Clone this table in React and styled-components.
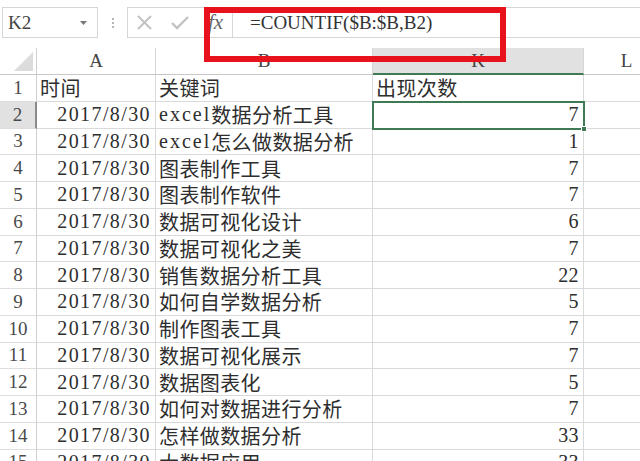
import React from "react";
import styled, { createGlobalStyle } from "styled-components";

const GlobalStyle = createGlobalStyle`
  html, body {
    margin: 0;
    padding: 0;
    background: #ffffff;
    overflow: hidden;
  }
  * {
    box-sizing: border-box;
  }
`;

const Page = styled.div`
  position: relative;
  width: 640px;
  height: 461px;
  overflow: hidden;
  background: #ffffff;
  font-family: "Liberation Serif", "Noto Sans CJK SC", serif;
  color: #333333;
`;

const FormulaBar = styled.div`
  display: flex;
  align-items: center;
  height: 48px;
  padding: 7px 0 10px 2px;
`;

const NameBox = styled.div`
  display: flex;
  align-items: center;
  justify-content: space-between;
  width: 96px;
  height: 31px;
  border: 1px solid #d6d6d6;
  padding: 0 10px 0 5px;
  font-size: 19px;
  color: #444444;
`;

const Dots = styled.div`
  display: flex;
  flex-direction: column;
  gap: 2px;
  margin: 0 13px 0 14px;
  span {
    width: 2px;
    height: 2px;
    background: #b5b5b5;
  }
`;

const ActionBox = styled.div`
  display: flex;
  align-items: center;
  width: 105px;
  height: 31px;
  border: 1px solid #d6d6d6;
  border-right: none;
  padding-left: 8px;
  gap: 18px;
`;

const FxLabel = styled.span`
  font-family: "Liberation Serif", serif;
  font-style: italic;
  font-size: 21px;
  color: #666666;
  margin-left: 1px;
`;

const FormulaInput = styled.div`
  flex: 1;
  display: flex;
  align-items: center;
  height: 31px;
  border: 1px solid #d6d6d6;
  border-right: none;
  padding-left: 17px;
  font-size: 19px;
  color: #333333;
  white-space: nowrap;
`;

const Sheet = styled.div`
  display: grid;
  grid-template-columns: 37px 119px 217px 211px 86px;
  grid-template-rows: 27px;
  grid-auto-rows: 26.75px;
`;

const Corner = styled.div`
  display: flex;
  align-items: flex-end;
  justify-content: flex-end;
  padding: 0 3px 3px 0;
  border-right: 1px solid #d0d0d0;
  border-bottom: 1px solid #c8c8c8;
`;

const ColHead = styled.div`
  display: flex;
  align-items: center;
  justify-content: center;
  font-size: 19px;
  color: #444444;
  background: ${(p) => (p.$active ? "#e1e1e1" : "#ffffff")};
  border-right: 1px solid #d6d6d6;
  border-bottom: ${(p) => (p.$active ? "2px solid #3f7a55" : "1px solid #c8c8c8")};
`;

const RowHead = styled.div`
  display: flex;
  align-items: center;
  justify-content: center;
  font-size: 19px;
  color: #4a4a4a;
  background: ${(p) => (p.$active ? "#e1e1e1" : "#ffffff")};
  border-right: ${(p) => (p.$active ? "2px solid #8a8a8a" : "1px solid #d0d0d0")};
  border-bottom: 1px solid #dedede;
`;

const Cell = styled.div`
  position: relative;
  display: flex;
  align-items: center;
  justify-content: ${(p) => (p.$align === "right" ? "flex-end" : "flex-start")};
  padding: ${(p) => (p.$align === "right" ? "0 4px 0 0" : "0 0 0 3px")};
  font-size: 20px;
  letter-spacing: ${(p) => (p.$date ? "1.4px" : "0.4px")};
  color: #2e2e2e;
  white-space: nowrap;
  overflow: hidden;
  border-right: 1px solid #dadada;
  border-bottom: 1px solid #dadada;
  ${(p) =>
    p.$selected &&
    `
    overflow: visible;
    outline: 2px solid #3f7a55;
    outline-offset: -1px;
    z-index: 2;
  `}
`;

const Latin = styled.span`
  letter-spacing: 2px;
`;

const FillHandle = styled.span`
  position: absolute;
  right: -4px;
  bottom: -4px;
  width: 6px;
  height: 6px;
  background: #3f7a55;
  border: 1px solid #ffffff;
`;

const Callout = styled.div`
  position: absolute;
  left: 204px;
  top: 7px;
  width: 302px;
  height: 55px;
  border: 6px solid #e8121c;
  z-index: 5;
  pointer-events: none;
`;

const rows = [
  ["时间", "关键词", "出现次数"],
  ["2017/8/30", "excel数据分析工具", "7"],
  ["2017/8/30", "excel怎么做数据分析", "1"],
  ["2017/8/30", "图表制作工具", "7"],
  ["2017/8/30", "图表制作软件", "7"],
  ["2017/8/30", "数据可视化设计", "6"],
  ["2017/8/30", "数据可视化之美", "7"],
  ["2017/8/30", "销售数据分析工具", "22"],
  ["2017/8/30", "如何自学数据分析", "5"],
  ["2017/8/30", "制作图表工具", "7"],
  ["2017/8/30", "数据可视化展示", "7"],
  ["2017/8/30", "数据图表化", "5"],
  ["2017/8/30", "如何对数据进行分析", "7"],
  ["2017/8/30", "怎样做数据分析", "33"],
  ["2017/8/30", "大数据应用", "33"],
];

// latin words in the keyword column are wider in the original font
const mixed = (text) =>
  text
    .split(/([A-Za-z]+)/)
    .filter(Boolean)
    .map((part, i) => (/^[A-Za-z]+$/.test(part) ? <Latin key={i}>{part}</Latin> : part));

const App = () => {
  return (
    <>
      <GlobalStyle />
      <Page>
        <FormulaBar>
          <NameBox>
            K2
            <svg width="7" height="4" viewBox="0 0 7 4">
              <path d="M0 0 L7 0 L3.5 4 Z" fill="#777" />
            </svg>
          </NameBox>
          <Dots>
            <span />
            <span />
            <span />
          </Dots>
          <ActionBox>
            <svg width="17" height="15" viewBox="0 0 17 15">
              <path d="M2 1 L15 14 M15 1 L2 14" stroke="#c2c2c2" strokeWidth="2" />
            </svg>
            <svg width="18" height="15" viewBox="0 0 18 15">
              <path d="M1 8 L6 13 L17 2" stroke="#c2c2c2" strokeWidth="2.4" fill="none" />
            </svg>
            <FxLabel>fx</FxLabel>
          </ActionBox>
          <FormulaInput>=COUNTIF($B:$B,B2)</FormulaInput>
        </FormulaBar>

        <Sheet>
          <Corner>
            <svg width="19" height="19" viewBox="0 0 19 19">
              <path d="M19 0 L19 19 L0 19 Z" fill="#dcdcdc" />
            </svg>
          </Corner>
          <ColHead>A</ColHead>
          <ColHead>B</ColHead>
          <ColHead $active>K</ColHead>
          <ColHead>L</ColHead>

          {rows.map((row, idx) => (
            <React.Fragment key={idx}>
              <RowHead $active={idx === 1}>{idx + 1}</RowHead>
              <Cell $align={idx === 0 ? "left" : "right"} $date={idx > 0}>
                {row[0]}
              </Cell>
              <Cell>{mixed(row[1])}</Cell>
              <Cell $align={idx === 0 ? "left" : "right"} $selected={idx === 1}>
                {row[2]}
                {idx === 1 && <FillHandle />}
              </Cell>
              <Cell />
            </React.Fragment>
          ))}
        </Sheet>

        <Callout />
      </Page>
    </>
  );
};

export default App;
